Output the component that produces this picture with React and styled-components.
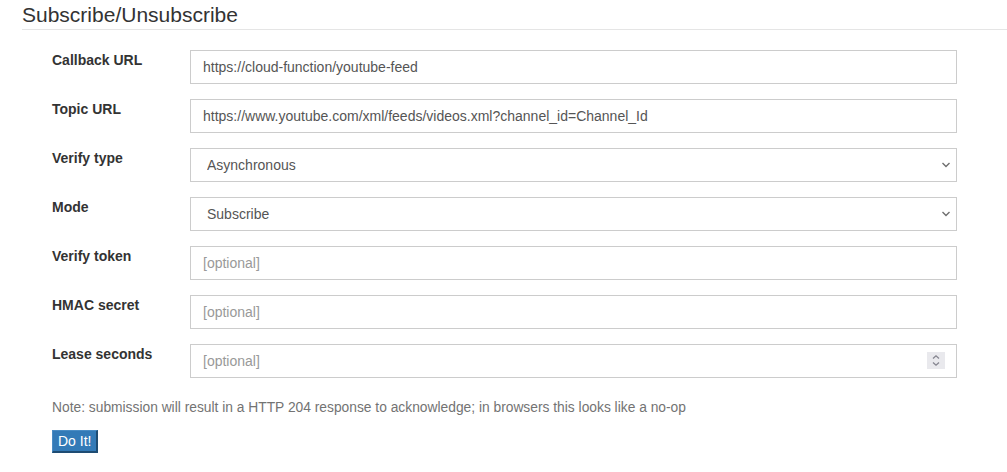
import React from 'react'
import styled, { createGlobalStyle } from 'styled-components'

const GlobalStyle = createGlobalStyle`
  body {
    margin: 0;
    background: #fff;
    font-family: "Liberation Sans", Arial, Helvetica, sans-serif;
    font-size: 14px;
    color: #333;
  }
`

const Page = styled.div`
  padding: 0 0 0 22px;
`

const Title = styled.h2`
  margin: 0;
  padding-top: 3px;
  box-sizing: border-box;
  height: 30px;
  font-size: 21px;
  font-weight: normal;
  line-height: 24px;
  color: #333;
  border-bottom: 1px solid #e5e5e5;
`

const Form = styled.form`
  padding: 20px 50px 0 30px;
`

const Row = styled.div`
  display: grid;
  grid-template-columns: 138px 1fr;
  align-items: start;
  margin-bottom: 15px;
`

const Label = styled.label`
  font-weight: bold;
  line-height: 20px;
  color: #333;
`

const Field = styled.div`
  position: relative;
`

const controlBase = `
  display: block;
  box-sizing: border-box;
  width: 100%;
  height: 34px;
  padding: 6px 12px;
  font-family: "Liberation Sans", Arial, Helvetica, sans-serif;
  font-size: 14px;
  color: #555;
  background: #fff;
  border: 1px solid #ccc;
  border-radius: 0;
  outline: none;
  margin: 0;
  &::placeholder { color: #999; }
`

const Input = styled.input`
  ${controlBase}
  &::-webkit-inner-spin-button,
  &::-webkit-outer-spin-button {
    -webkit-appearance: none;
    margin: 0;
  }
`

const Select = styled.select`
  ${controlBase}
  appearance: none;
  -webkit-appearance: none;
  padding: 6px 24px 6px 16px;
`

const Chevron = styled.span`
  position: absolute;
  right: 6px;
  top: 13px;
  width: 10px;
  height: 8px;
  display: flex;
  pointer-events: none;
`

const Spinner = styled.span`
  position: absolute;
  right: 12px;
  top: 8px;
  width: 18px;
  height: 17px;
  background: #e9e9ed;
  display: flex;
  align-items: center;
  justify-content: center;
  pointer-events: none;
`

const Note = styled.p`
  margin: 0 0 12px;
  padding-top: 5px;
  font-size: 13.8px;
  color: #737373;
  line-height: 20px;
`

const Button = styled.button`
  box-sizing: border-box;
  height: 23px;
  padding: 0 5px;
  font-family: "Liberation Sans", Arial, Helvetica, sans-serif;
  font-size: 14px;
  color: #fff;
  background: #337ab7;
  border-style: solid;
  border-width: 1px 2px 2px 1px;
  border-color: #4a8cc4 #1e4c73 #1e4c73 #4a8cc4;
  border-radius: 0;
  cursor: pointer;
`

const rows = [
  { label: 'Callback URL', value: 'https://cloud-function/youtube-feed' },
  { label: 'Topic URL', value: 'https://www.youtube.com/xml/feeds/videos.xml?channel_id=Channel_Id' },
  { label: 'Verify type', options: ['Asynchronous', 'Synchronous'] },
  { label: 'Mode', options: ['Subscribe', 'Unsubscribe'] },
  { label: 'Verify token', placeholder: '[optional]' },
  { label: 'HMAC secret', placeholder: '[optional]' },
  { label: 'Lease seconds', placeholder: '[optional]', number: true },
]

const SpinIcon = () => (
  <svg width="10" height="13" viewBox="0 0 10 13" fill="none" stroke="#85858f" strokeWidth="1.3">
    <path d="M2 4.5 L5 1.8 L8 4.5" />
    <path d="M2 8.5 L5 11.2 L8 8.5" />
  </svg>
)

const ChevronIcon = () => (
  <svg width="10" height="8" viewBox="0 0 10 8" fill="none" stroke="#6f6f6f" strokeWidth="1.4">
    <path d="M1.5 2 L5 5.5 L8.5 2" />
  </svg>
)

const App = () => {
  return (
    <Page>
      <GlobalStyle />
      <Title>Subscribe/Unsubscribe</Title>
      <Form onSubmit={(e) => e.preventDefault()}>
        {rows.map((r) => (
          <Row key={r.label}>
            <Label>{r.label}</Label>
            <Field>
              {r.options ? (
                <>
                  <Select defaultValue={r.options[0]}>
                    {r.options.map((o) => <option key={o}>{o}</option>)}
                  </Select>
                  <Chevron><ChevronIcon /></Chevron>
                </>
              ) : (
                <Input
                  type={r.number ? 'number' : 'text'}
                  defaultValue={r.value}
                  placeholder={r.placeholder}
                />
              )}
              {r.number && <Spinner><SpinIcon /></Spinner>}
            </Field>
          </Row>
        ))}
        <Note>Note: submission will result in a HTTP 204 response to acknowledge; in browsers this looks like a no-op</Note>
        <Button type="submit">Do It!</Button>
      </Form>
    </Page>
  )
}

export default App
